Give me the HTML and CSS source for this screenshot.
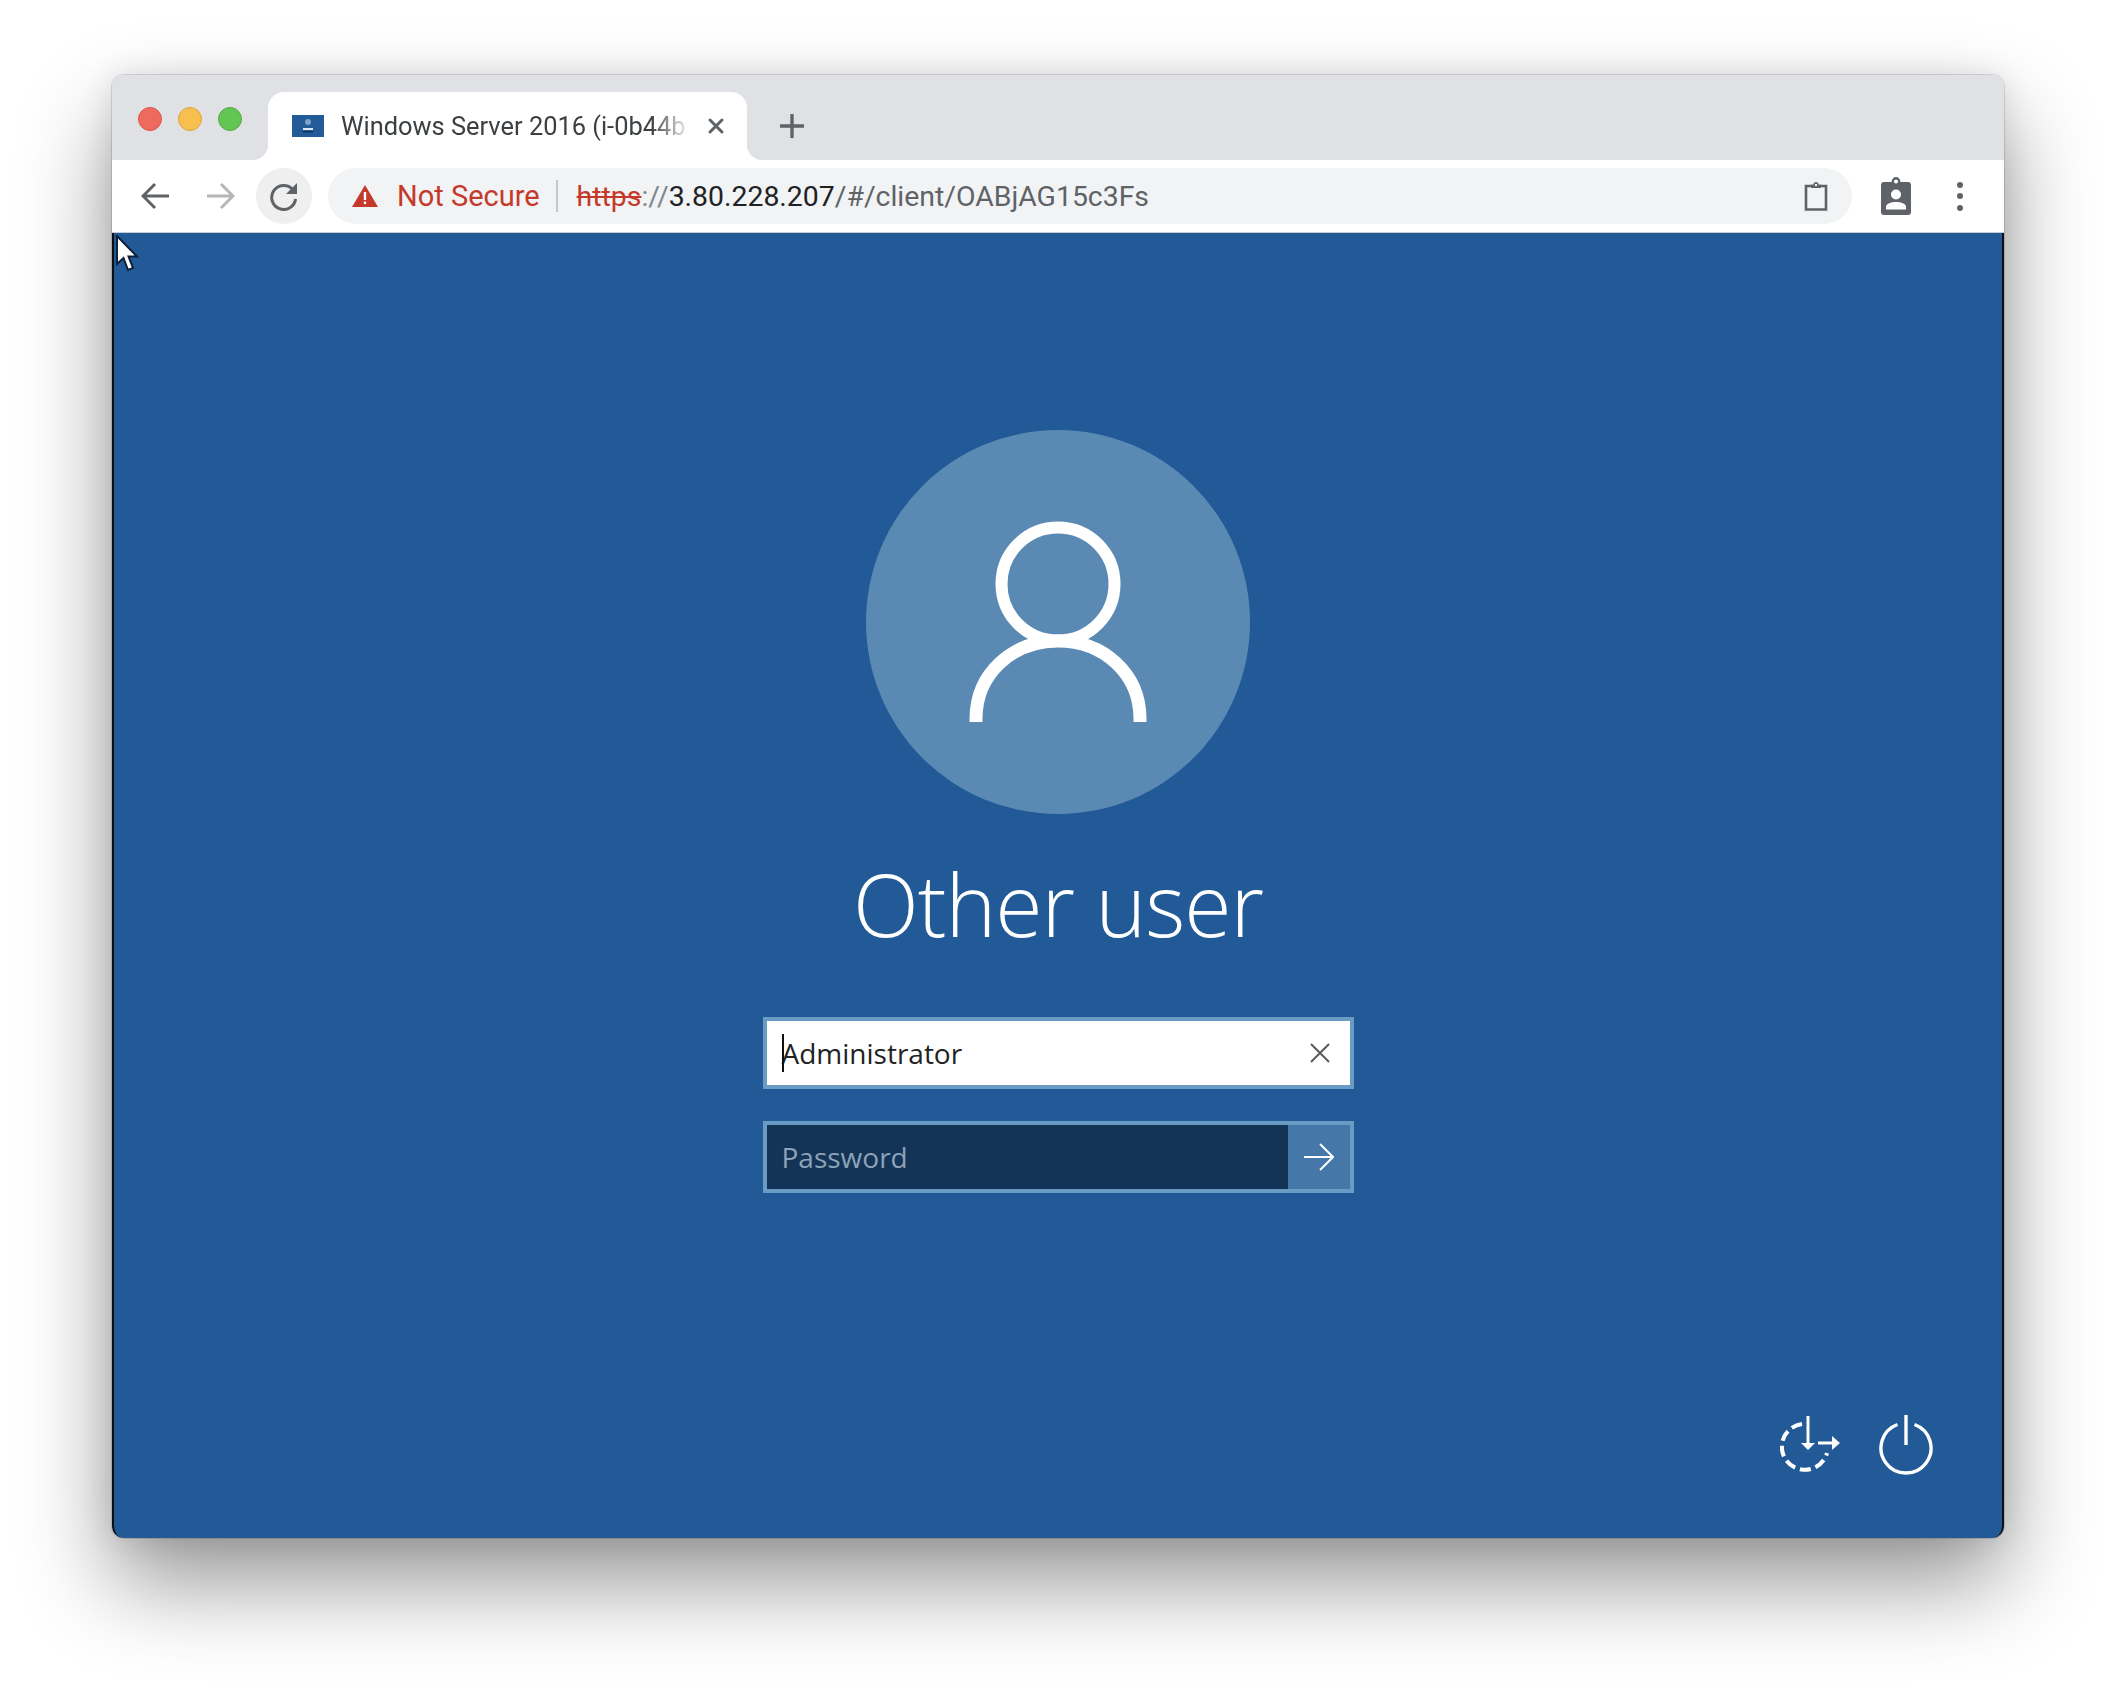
FILE: index.html
```html
<!DOCTYPE html>
<html lang="en">
<head>
  <meta charset="UTF-8" />
  <title>Windows Server 2016</title>
  <link rel="stylesheet" href="styles.css">
</head>
<body>
  <div class="window">

    <!-- tab strip -->
    <div class="tab-strip">
      <div class="lights">
        <span class="light red"></span>
        <span class="light yellow"></span>
        <span class="light green"></span>
      </div>
      <div class="tab">
        <svg class="favicon" width="32" height="22" viewBox="0 0 32 22">
          <rect width="32" height="22" fill="#235a98"/>
          <circle cx="16" cy="7" r="3" fill="#7fa3c6"/>
          <rect x="11" y="13" width="10" height="2" fill="#dfe8f1"/>
          <rect x="11" y="16" width="10" height="1.5" fill="#12345a"/>
        </svg>
        <span class="tab-title">Windows Server 2016 (i-0b44b</span>
        <svg class="tab-close" width="18" height="18" viewBox="0 0 18 18">
          <path d="M3 3 15 15M15 3 3 15" stroke="#5f6368" stroke-width="3" stroke-linecap="round"/>
        </svg>
      </div>
      <svg class="new-tab" width="24" height="24" viewBox="0 0 24 24">
        <path d="M12 1V23M1 12H23" stroke="#5f6368" stroke-width="3.4" stroke-linecap="round"/>
      </svg>
    </div>

    <!-- toolbar -->
    <div class="toolbar">
      <svg class="nav-btn" width="30" height="28" viewBox="0 0 30 28">
        <path d="M28 14H3M14 2 2 14 14 26" fill="none" stroke="#5f6368" stroke-width="3"/>
      </svg>
      <svg class="nav-btn" width="30" height="28" viewBox="0 0 30 28">
        <path d="M2 14H27M16 2 28 14 16 26" fill="none" stroke="#b4b6b9" stroke-width="3"/>
      </svg>
      <div class="reload">
        <svg width="30" height="30" viewBox="0 0 30 30">
          <path d="M23.6 8.4A12 12 0 1 0 26.6 18" fill="none" stroke="#5f6368" stroke-width="3"/>
          <path d="M28 2V13H17Z" fill="#5f6368"/>
        </svg>
      </div>
      <div class="omnibox">
        <svg class="warn" width="26" height="22" viewBox="0 0 26 22">
          <path d="M13 0 26 22H0Z" fill="#c5392b"/>
          <rect x="11.8" y="7" width="2.4" height="8" fill="#fff"/>
          <rect x="11.8" y="16.5" width="2.4" height="2.6" fill="#fff"/>
        </svg>
        <span class="not-secure">Not Secure</span>
        <span class="sep"></span>
        <span class="url"><s class="scheme">https</s><span class="url-dim">://</span><span class="host">3.80.228.207</span><span class="url-path">/#/client/OABjAG15c3Fs</span></span>
        <svg class="clipboard" width="24" height="30" viewBox="0 0 24 30">
          <path d="M7 5H2V28.500H22V5H17" fill="none" stroke="#5f6368" stroke-width="2.600"/>
          <path d="M7 7V3.500H9.500A2.500 2.500 0 0 1 14.500 3.500H17V7Z" fill="#5f6368"/>
          <circle cx="12" cy="4" r="1.200" fill="#f1f3f4"/>
        </svg>
      </div>
      <svg class="badge" width="30" height="38" viewBox="0 0 30 38">
        <rect y="5" width="30" height="33" rx="3" fill="#5f6368"/>
        <circle cx="15" cy="4.500" r="3.200" fill="#fff" stroke="#5f6368" stroke-width="2.400"/>
        <circle cx="15" cy="17.500" r="5" fill="#fff"/>
        <path d="M5 32.500V30C5 26.500 10 25 15 25S25 26.500 25 30V32.500Z" fill="#fff"/>
      </svg>
      <div class="dots"><span></span><span></span><span></span></div>
    </div>

    <!-- remote desktop -->
    <div class="screen">
      <svg class="cursor" width="28" height="40" viewBox="0 0 28 40">
        <path d="M3 1V29L9.500 23 14 35 19 33 14.500 21.500H23Z" fill="#fff" stroke="#0d2036" stroke-width="2"/>
      </svg>

      <div class="avatar">
        <svg width="190" height="210" viewBox="0 0 190 210">
          <circle cx="95" cy="69" r="56.500" fill="none" stroke="#fff" stroke-width="12"/>
          <path d="M13 207V204C13 158 50 126 95 126S177 158 177 204V207" fill="none" stroke="#fff" stroke-width="13"/>
        </svg>
      </div>

      <h1 class="user-name">Other user</h1>

      <div class="field field-user">
        <span class="caret"></span>
        <span class="field-text">Administrator</span>
        <svg class="clear" width="20" height="20" viewBox="0 0 20 20">
          <path d="M1 1 19 19M19 1 1 19" stroke="#5a5a5a" stroke-width="2"/>
        </svg>
      </div>

      <div class="field field-pass">
        <span class="field-text">Password</span>
        <div class="submit">
          <svg width="30" height="28" viewBox="0 0 30 28">
            <path d="M0 14H28M16 1 29 14 16 27" fill="none" stroke="#fff" stroke-width="2"/>
          </svg>
        </div>
      </div>

      <div class="corner-icons">
        <svg width="62" height="56" viewBox="0 0 62 56">
          <path d="M22 8A23 23 0 1 0 47 37" fill="none" stroke="#fff" stroke-width="4" stroke-dasharray="11 5"/>
          <path d="M28 0V30" stroke="#fff" stroke-width="3"/>
          <path d="M21 27H35L28 34Z" fill="#fff"/>
          <path d="M38 27H54" stroke="#fff" stroke-width="3"/>
          <path d="M52 20V34L60 27Z" fill="#fff"/>
        </svg>
        <svg width="56" height="62" viewBox="0 0 56 62">
          <path d="M19.500 11.500A25 25 0 1 0 36.500 11.500" fill="none" stroke="#fff" stroke-width="3.400"/>
          <path d="M28 2V32" stroke="#fff" stroke-width="3.400"/>
        </svg>
      </div>
    </div>
  </div>
</body>
</html>
```

FILE: styles.css
```css
* { box-sizing: border-box; margin: 0; padding: 0; }
html, body { height: 100%; }
body { background: #fff; padding: 75px 112px 148px 112px; font-family: 'Roboto', sans-serif; overflow: hidden; }

.window {
  width: 1892px;
  height: 1463px;
  display: flex;
  flex-direction: column;
  border-radius: 12px;
  overflow: visible;
  box-shadow: 0 44px 90px rgba(0,0,0,0.42), 0 0 30px rgba(0,0,0,0.10), 0 0 0 1px rgba(0,0,0,0.12);
}

/* —— tab strip —— */
.tab-strip {
  height: 85px;
  flex: none;
  display: flex;
  align-items: flex-end;
  background: #dfe1e5;
  border-radius: 12px 12px 0 0;
  padding-left: 26px;
}
.lights { display: flex; gap: 16px; align-self: flex-start; margin-top: 32px; width: 130px; }
.light { width: 24px; height: 24px; border-radius: 50%; }
.light.red { background: #ee6a5f; border: 1px solid #d9574d; }
.light.yellow { background: #f6bf4f; border: 1px solid #dfa63c; }
.light.green { background: #62c554; border: 1px solid #52ad45; }

.tab {
  position: relative;
  width: 479px;
  height: 68px;
  background: #fff;
  border-radius: 16px 16px 0 0;
  display: flex;
  align-items: center;
  padding: 0 0 0 24px;
  margin-left: 0;
}
.tab::before, .tab::after {
  content: '';
  position: absolute;
  bottom: 0;
  width: 16px;
  height: 16px;
}
.tab::before { left: -16px; background: radial-gradient(circle at 0 0, transparent 16px, #fff 16.5px); }
.tab::after { right: -16px; background: radial-gradient(circle at 100% 0, transparent 16px, #fff 16.5px); }
.favicon { flex: none; margin-top: -1px; }
.tab-title {
  width: 350px;
  margin-left: 17px;
  font-size: 25.4px;
  color: #3c4043;
  white-space: nowrap;
  overflow: hidden;
  -webkit-mask-image: linear-gradient(to right, #000 310px, transparent 350px);
  mask-image: linear-gradient(to right, #000 310px, transparent 350px);
}
.tab-close { flex: none; margin-left: 16px; }
.new-tab { margin: 0 0 22px 33px; }

/* —— toolbar —— */
.toolbar {
  height: 73px;
  flex: none;
  display: flex;
  align-items: center;
  background: #fff;
  padding-left: 29px;
  border-bottom: 1px solid #c8ccd2;
}
.nav-btn { flex: none; margin-right: 34px; }
.nav-btn + .nav-btn { margin-right: 21px; }
.reload {
  width: 56px;
  height: 56px;
  border-radius: 50%;
  background: #efefef;
  display: flex;
  align-items: center;
  justify-content: center;
  flex: none;
  margin-right: 16px;
}
.omnibox {
  width: 1524px;
  height: 56px;
  border-radius: 28px;
  background: #f1f3f4;
  display: flex;
  align-items: center;
  padding-left: 24px;
  font-size: 29px;
  white-space: nowrap;
  flex: none;
}
.warn { flex: none; margin-top: -1px; }
.not-secure { color: #c5392b; margin-left: 19px; }
.sep { width: 2px; height: 32px; background: #c4c6c9; margin: 0 19px 0 16px; }
.url { color: #5f6368; flex: 1; font-size: 28.4px; }
.scheme { color: #c5392b; }
.url-dim { color: #80868b; }
.host { color: #202124; }
.clipboard { flex: none; margin-right: 24px; }
.badge { flex: none; margin: 0 46px 0 29px; }
.dots { display: flex; flex-direction: column; gap: 5.5px; }
.dots span { width: 6px; height: 6px; border-radius: 50%; background: #5f6368; }

/* —— login screen —— */
.screen {
  position: relative;
  flex: 1;
  background: #225a97;
  border-left: 2px solid #0b0f14;
  border-right: 2px solid #0b0f14;
  border-radius: 0 0 12px 12px;
  display: flex;
  flex-direction: column;
  align-items: center;
  padding-top: 197px;
  font-family: 'Open Sans', sans-serif;
}
.cursor { position: absolute; top: 2px; left: 0; }
.avatar {
  width: 384px;
  height: 384px;
  border-radius: 50%;
  background: #5a8ab3;
  display: flex;
  align-items: center;
  justify-content: center;
  flex: none;
  padding-bottom: 4px;
}
.user-name {
  font-size: 86px;
  font-weight: 300;
  letter-spacing: -1px;
  line-height: 120px;
  color: #fff;
  margin-top: 30px;
  margin-bottom: 53px;
}
.field {
  position: relative;
  width: 591px;
  height: 72px;
  border: 4px solid #6a9bc4;
  display: flex;
  align-items: center;
  flex: none;
  font-size: 28px;
}
.field-text { margin-left: 15px; }
.field-user { background: #fff; color: #222; justify-content: space-between; padding-right: 20px; }
.caret { position: absolute; left: 15px; top: 13px; width: 2px; height: 38px; background: #111; }
.field-pass { background: #133357; color: #8ca3b8; margin-top: 32px; justify-content: space-between; }
.submit {
  width: 62px;
  align-self: stretch;
  background: #4577a8;
  display: flex;
  align-items: center;
  justify-content: center;
}
.corner-icons {
  margin-top: auto;
  align-self: flex-end;
  display: flex;
  align-items: center;
  gap: 36px;
  padding: 0 68px 63px 0;
}
```
